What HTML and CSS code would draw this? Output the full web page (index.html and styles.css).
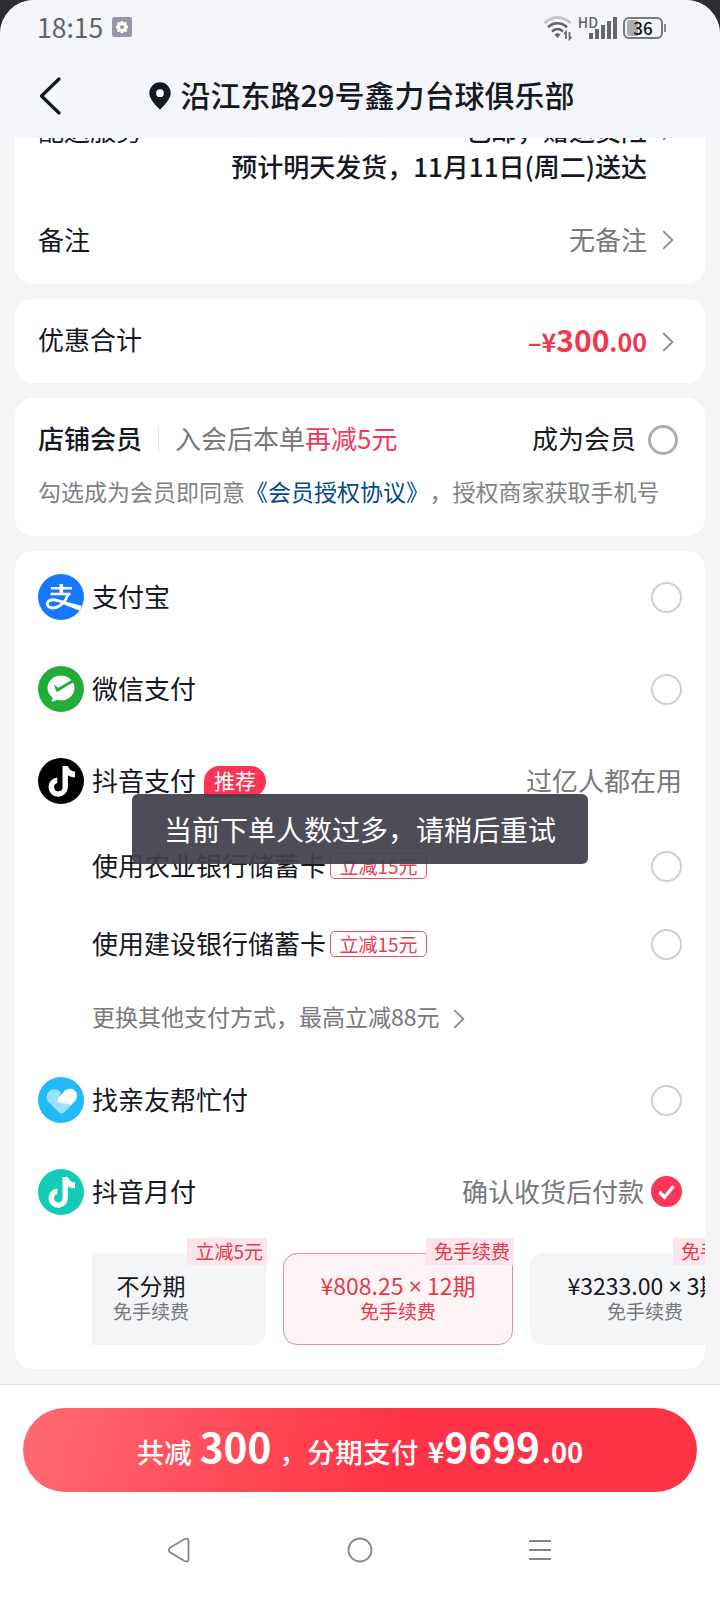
FILE: index.html
```html
<!DOCTYPE html>
<html lang="zh-CN">
<head>
<meta charset="utf-8">
<title>确认订单</title>
<link rel="stylesheet" href="styles.css">
</head>
<body>
<svg class="defs" width="0" height="0" aria-hidden="true">
  <symbol id="chevron" viewBox="0 0 12 20"><path d="M1.2 1.2 10.4 10 1.2 18.8" fill="none" stroke="currentColor" stroke-width="1.8"/></symbol>
  <symbol id="note" viewBox="0 0 46 46">
    <path d="M24.500 8h5.400c.8 2.800 3.200 5.100 7.100 5.600v5.700c-2.800 0-5.200-.8-7.100-2.100v11.900a9.700 9.700 0 1 1-10.600-9.700v5.700a4.200 4.200 0 1 0 5.200 4.100z" fill="#fff"/>
  </symbol>
</svg>
<div class="screen">
  <header class="top">
    <div class="status">
      <div class="status-side">
        <span class="clock">18:15</span>
        <svg width="20" height="20" viewBox="0 0 20 20"><rect width="20" height="20" rx="2.500" fill="#9796a8"/><g fill="#fff"><circle cx="10" cy="10" r="5"/><circle cx="10" cy="5.200" r="1.500"/><circle cx="10" cy="14.800" r="1.500"/><circle cx="5.200" cy="10" r="1.500"/><circle cx="14.800" cy="10" r="1.500"/><circle cx="6.600" cy="6.600" r="1.500"/><circle cx="13.400" cy="6.600" r="1.500"/><circle cx="6.600" cy="13.400" r="1.500"/><circle cx="13.400" cy="13.400" r="1.500"/></g><circle cx="10" cy="10" r="2" fill="#9796a8"/></svg>
      </div>
      <div class="status-side status-right">
        <svg width="30" height="26" viewBox="0 0 30 26"><g fill="none" stroke-width="2.600"><path d="M1.500 8C9 .8 20 .8 27.500 8" stroke="#c2c3c6"/><path d="M5 12.300c5.500-5.400 13.500-5.400 19 0" stroke="#626367"/><path d="M9 16.500c3.300-3.200 7.700-3.200 11 0" stroke="#626367"/></g><path d="M11.500 19.500q3-2.500 6 0L14.500 23z" fill="#626367"/><path d="M23 24v-7l-1.800 2M26.500 17v7l1.800-2" fill="none" stroke="#626367" stroke-width="1.700"/></svg>
        <span class="hd">HD</span>
        <svg class="bars" width="28" height="22" viewBox="0 0 28 22" fill="#66676b"><rect y="16" width="4" height="6"/><rect x="6" y="12" width="4" height="10"/><rect x="12" y="8" width="4" height="14"/><rect x="18" y="4" width="4" height="18"/><rect x="24" width="4" height="22"/></svg>
        <div class="battery"><span>36</span></div><i class="battery-tip"></i>
      </div>
    </div>
    <div class="address">
      <svg class="back" width="24" height="38" viewBox="0 0 24 38"><path d="M21 2 3.500 19 21 36" fill="none" stroke="#161823" stroke-width="3.200" stroke-linecap="round" stroke-linejoin="round"/></svg>
      <svg class="pin" width="22" height="28" viewBox="0 0 22 28"><path fill-rule="evenodd" d="M11 .3A10.700 10.700 0 0 0 .3 11c0 6 6.500 12.500 10.700 16.700C15.200 23.500 21.700 17 21.700 11A10.700 10.700 0 0 0 11 .3zm0 7a3.900 3.900 0 1 1 0 7.800 3.900 3.900 0 0 1 0-7.800z" fill="#161823"/></svg>
      <h1>沿江东路29号鑫力台球俱乐部</h1>
    </div>
  </header>

  <main class="content">
    <section class="card delivery">
      <div class="row service"><span>配送服务</span><span class="value">包邮，赠退货险<svg class="chev"><use href="#chevron"/></svg></span></div>
      <p class="eta">预计明天发货，11月11日(周二)送达</p>
      <div class="row remark"><span>备注</span><span class="value grey">无备注<svg class="chev"><use href="#chevron"/></svg></span></div>
    </section>

    <section class="card discount">
      <div class="row"><span>优惠合计</span><span class="value price"><span class="small">–¥</span><span class="big">300</span><span class="small">.00</span><svg class="chev"><use href="#chevron"/></svg></span></div>
    </section>

    <section class="card member">
      <div class="row join"><b>店铺会员</b><i class="sep"></i><span class="grey">入会后本单<em>再减5元</em></span><span class="become">成为会员</span><i class="radio dark"></i></div>
      <p class="terms">勾选成为会员即同意<a>《会员授权协议》</a>，授权商家获取手机号</p>
    </section>

    <section class="card pay">
      <div class="method">
        <svg class="logo" viewBox="0 0 46 46"><circle cx="23" cy="23" r="23" fill="#1677ff"/><g fill="none" stroke="#fff"><path d="M13 14.200h21M12.500 20h20" stroke-width="2.500"/><path d="M23.300 10v10" stroke-width="3.500"/><path d="M30 20c-2 7.500-8.500 14-15.200 14-7 0-7.600-8.200 0-8.200 7 0 12 4.200 27.500 8.900" stroke-width="2.900"/></g><path d="m27 27.500 16.500 4.300-1.600 5-15-6z" fill="#fff"/></svg>
        <span class="name">支付宝</span><i class="radio"></i>
      </div>
      <div class="method">
        <svg class="logo" viewBox="0 0 46 46"><circle cx="23" cy="23" r="23" fill="#22ac38"/><path d="M23 9.500C15.500 9.500 9.500 15 9.500 22c0 4 2 7.500 5.200 9.800L13.800 36l5-2.300c1.300.5 2.700.7 4.200.7 7.500 0 13.500-5.500 13.500-12.400S30.500 9.500 23 9.500z" fill="#fff"/><path d="m15.800 18.800 4.700 3 14-8.200 1.300 2.300-16 9.600c-.8.400-1.300.2-1.600-.5z" fill="#22ac38"/></svg>
        <span class="name">微信支付</span><i class="radio"></i>
      </div>
      <div class="method">
        <svg class="logo" viewBox="0 0 46 46"><circle cx="23" cy="23" r="23"/><use href="#note"/></svg>
        <span class="name">抖音支付</span><span class="hot">推荐</span><span class="hint">过亿人都在用</span>
      </div>
      <div class="bank"><span class="name">使用农业银行储蓄卡</span><span class="off">立减15元</span><i class="radio"></i></div>
      <div class="bank"><span class="name">使用建设银行储蓄卡</span><span class="off">立减15元</span><i class="radio"></i></div>
      <div class="other"><span>更换其他支付方式，最高立减88元</span><svg class="chev"><use href="#chevron"/></svg></div>
      <div class="method">
        <svg class="logo" viewBox="0 0 46 46"><circle cx="23" cy="23" r="23" fill="#20b9fa"/><path d="M23 15.500c-3.500-4.500-10-4.500-13 0-2.500 3.500-1.800 7.300.7 9.800L21 35.500c1.500 1.500 3.500 1.500 5 0l8-8-13-8z" fill="#9be2ff"/><path d="M20.500 20.500 26.500 14c3-3 8-3.200 10.700 0 2.800 3.200 2.300 7.500-.4 10.300l-3.200 3.200c-1.500.6-2.900-.2-4-1.800-2.300 1.800-5 1.300-6-.7-2 .9-4 .2-3.800-1.300.1-1 .3-1.700.7-3.200z" fill="#fff"/></svg>
        <span class="name">找亲友帮忙付</span><i class="radio"></i>
      </div>
      <div class="method">
        <svg class="logo" viewBox="0 0 46 46"><circle cx="23" cy="23" r="23" fill="#14cbb8"/><use href="#note"/></svg>
        <span class="name">抖音月付</span><span class="hint">确认收货后付款</span>
        <svg class="checked" width="31" height="31" viewBox="0 0 31 31"><circle cx="15.500" cy="15.500" r="15.500" fill="#fb3559"/><path d="m8.500 16 5 5.200 9-11" fill="none" stroke="#fff" stroke-width="3.300"/></svg>
      </div>
      <div class="plans">
        <div class="plan first"><span class="tag">立减5元</span><div class="plan-text"><p>不分期</p><small>免手续费</small></div></div>
        <div class="plan active"><span class="tag">免手续费</span><p>¥808.25 <span class="times">×</span> 12期</p><small>免手续费</small></div>
        <div class="plan"><span class="tag">免手续费</span><p>¥3233.00 <span class="times">×</span> 3期</p><small>免手续费</small></div>
      </div>
    </section>
  </main>

  <footer class="bottom">
    <button class="submit"><span>共减</span><strong class="saved">300</strong><span class="by">，分期支付</span><span class="yen">¥</span><strong>9699</strong><span class="cents">.00</span></button>
    <nav class="sysnav">
      <svg width="24" height="28" viewBox="0 0 24 28"><path d="M3 11.800 17.200 3.300Q21.500 1.200 21.500 5v18q0 3.800-4.300 1.700L3 16.200Q.5 14 3 11.800z"/></svg>
      <svg width="26" height="26" viewBox="0 0 26 26"><circle cx="13" cy="13" r="11.500"/></svg>
      <svg width="24" height="24" viewBox="0 0 24 24"><path d="M1 3h22M1 12h22M1 21h22"/></svg>
    </nav>
  </footer>

  <div class="toast">当前下单人数过多，请稍后重试</div>
</div>
</body>
</html>
```

FILE: styles.css
```css
* { box-sizing: border-box; margin: 0; padding: 0; }
html, body { width: 720px; height: 1600px; overflow: hidden; }
body { background: #2d2d2f; font-family: "Noto Sans CJK SC", sans-serif; font-size: 26px; color: #161823; }
i, em { font-style: normal; }
svg { display: block; flex: none; }
.defs { position: absolute; }
.screen { position: relative; display: flex; flex-direction: column; width: 720px; height: 1600px; border-radius: 34px 34px 0 0; overflow: hidden; background: #f5f5f5; }

.top { height: 138px; flex: none; background: #f4f5f8; }
.status { display: flex; justify-content: space-between; height: 54px; padding: 0 54px 0 37px; color: #626367; }
.status-side { display: flex; align-items: center; gap: 9px; }
.status-right { gap: 0; padding-top: 2px; }
.clock { font-size: 26.5px; line-height: 54px; }
.hd { font-size: 14px; line-height: 14px; font-weight: 500; margin: -13px -8px 0 5px; }
.bars { margin-right: 6px; margin-left: -1px; }
.battery { width: 40px; height: 22px; border: 2px solid #77787c; border-radius: 6px; background: linear-gradient(90deg, #aaabae 36%, transparent 36%); background-clip: content-box; padding: 1px 2px; color: #111; font-size: 17px; font-weight: 500; line-height: 15px; text-align: center; }
.battery-tip { width: 2px; height: 8px; background: #88898c; margin-left: 1px; }
.address { position: relative; display: flex; align-items: center; justify-content: center; gap: 9px; height: 84px; padding: 0 0 2px 4px; }
.address h1 { font-size: 30px; font-weight: 500; line-height: 40px; padding-bottom: 2px; white-space: nowrap; }
.pin { margin-top: 2px; }
.back { position: absolute; left: 38px; top: 23px; }

.content { flex: none; height: 1246px; padding: 0 15px; overflow: hidden; display: flex; flex-direction: column; gap: 15px; }
.card { flex: none; background: #fff; border-radius: 18px; padding: 0 23px; }
.row { display: flex; align-items: center; justify-content: space-between; }
.value { display: flex; align-items: center; padding-right: 8px; }
.chev { width: 12px; height: 20px; margin: 4px 0 0 15px; color: #8a8b91; }
.grey { color: #77787c; }

.delivery { height: 146px; border-radius: 0 0 18px 18px; }
.service { height: 34px; margin-top: -26px; }
.service, .eta { font-weight: 500; }
.service > span:first-child { font-weight: 400; }
.eta { height: 40px; line-height: 40px; text-align: right; padding-right: 35px; }
.remark { height: 104px; }
.discount { height: 84px; }
.discount .row { height: 80px; }
.discount .row > span:first-child { padding-bottom: 2px; }
.price { align-items: baseline; color: #f0384c; font-weight: 700; padding-top: 2px; }
.price .big { font-size: 30px; line-height: 38px; }
.price .small { font-size: 25px; line-height: 38px; }
.price .chev { align-self: center; margin-top: 3px; }

.member { height: 138px; padding-top: 16px; }
.join { height: 50px; justify-content: flex-start; }
.join b { font-weight: 500; }
.join b, .join > span { padding-bottom: 3px; }
.sep { width: 1px; height: 26px; margin: 0 16px; background: #e6e6e8; }
.join em { color: #f0385a; }
.become { margin-left: auto; margin-right: 12px; }
.radio { flex: none; width: 31px; height: 31px; margin-left: auto; border: 2px solid #d0d0d3; border-radius: 50%; }
.radio.dark { width: 30px; height: 30px; margin: 1px 4px 0 0; border-color: #adadb0; border-width: 3px; }
.terms { margin-top: 10px; font-size: 23px; line-height: 34px; color: #818287; white-space: nowrap; }
.terms a { margin-right: 12px; color: #04498d; }

.pay { height: 818px; padding-bottom: 24px; }
.method { display: flex; align-items: center; height: 92px; }
.logo { width: 46px; height: 46px; margin-right: 8px; }
.name, .hint { padding-bottom: 4px; }
.hot { margin-left: 8px; height: 31px; padding: 0 10px; border-radius: 16px 16px 16px 3px; background: #fe3355; color: #fff; font-size: 21px; line-height: 29px; }
.hint { margin-left: auto; color: #77787c; }
.checked { margin-left: 7px; margin-bottom: 2px; }
.bank { display: flex; align-items: center; height: 78px; padding-left: 54px; }
.off { height: 26px; margin-left: 4px; padding: 0 8.5px; border: 1.500px solid #e05363; border-radius: 5px; color: #e84053; font-size: 19px; line-height: 23px; }
.other { display: flex; align-items: center; height: 71px; padding: 0 0 3px 54px; font-size: 23px; color: #77787c; }
.other span { padding-bottom: 2px; }
.other .chev { margin: 3px 0 0 13px; }
.plans { display: flex; gap: 17px; height: 107px; margin: 0 -23px 0 54px; padding-top: 15px; overflow: hidden; }
.plan { position: relative; flex: none; width: 230px; height: 92px; padding-top: 17px; border-radius: 14px; background: #f4f5f7; text-align: center; }
.plan p { font-size: 23px; line-height: 30px; white-space: nowrap; }
.plan small { display: block; font-size: 19px; line-height: 22px; color: #77787c; }
.times { font-family: "Noto Sans", sans-serif; line-height: 1; }
.plan.first { width: 174px; border-radius: 0 0 14px 0; }
.plan-text { width: 118px; }
.plan.active { padding-top: 16px; border: 1px solid #e88ca4; background: #fff4f5; }
.plan.active p, .plan.active small { color: #e63a4b; }
.tag { position: absolute; right: -1px; top: -15px; height: 27px; padding: 0 4px 0 8px; background: #ffe5eb; color: #dc3d4f; font-size: 19px; line-height: 25px; }
.plan.active .tag { top: -16px; right: -2px; }

.bottom { flex: none; height: 216px; border-top: 1px solid #e0e0e2; background: #fff; padding: 23px 23px 0; }
.submit { display: flex; align-items: baseline; justify-content: center; width: 674px; height: 84px; border: 0; border-radius: 42px; background: linear-gradient(105deg, #ff6b70 0%, #ff3347 55%, #ff3246 100%); color: #fff; font-family: inherit; font-size: 27.5px; font-weight: 500; white-space: nowrap; line-height: 76px; }
.submit strong { font-size: 40.5px; font-weight: 700; }
.submit .saved { margin: 0 8px 0 8px; }
.submit .by { letter-spacing: .4px; }
.yen { font-size: 28px; font-weight: 700; margin-left: 9px; }
.cents { font-size: 27.5px; font-weight: 700; margin-left: 2px; }
.sysnav { display: flex; justify-content: space-between; align-items: center; height: 115px; padding: 0 145px 0 144px; }
.sysnav svg { fill: none; stroke: #85868a; stroke-width: 1.800; }

.toast { position: absolute; left: 132px; top: 794px; width: 456px; height: 70px; border-radius: 6px; background: rgba(65, 63, 74, .93); color: #fff; font-size: 28px; line-height: 70px; text-align: center; white-space: nowrap; }
```
